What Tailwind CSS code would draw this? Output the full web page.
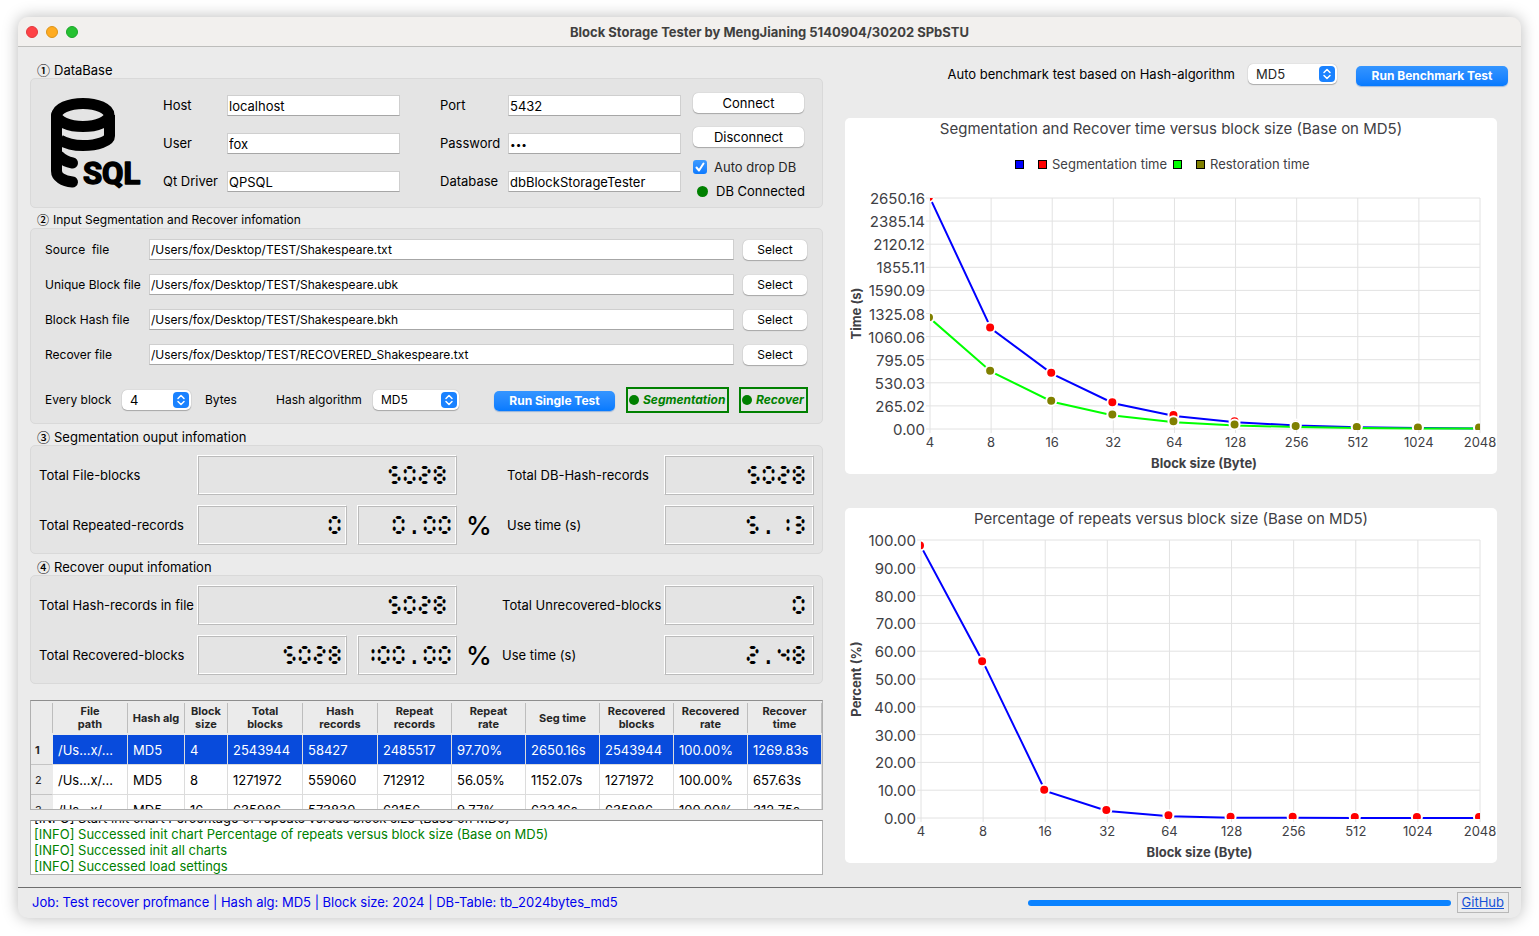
<!DOCTYPE html>
<html lang="en">
<head>
<meta charset="utf-8">
<title>Block Storage Tester</title>
<script src="https://cdn.jsdelivr.net/npm/@tailwindcss/browser@4"></script>
</head>
<body class="flex min-h-screen bg-white p-[18px] pt-[17px] font-['Inter','Noto_Sans_CJK_SC',sans-serif] text-[13px] leading-4 text-black">
<div class="flex min-w-0 flex-1 flex-col rounded-[10px] bg-[#ebebeb] shadow-[0_0_16px_rgba(0,0,0,0.28)]">

  <header class="flex h-[30px] items-center rounded-t-[10px] border-b border-[#bdbdbb] bg-[#f2f0ee] px-2">
    <div class="flex w-24 gap-2">
      <button type="button" aria-label="Close" class="size-3 rounded-full border border-[#e2383c] bg-[#fe4246]"></button>
      <button type="button" aria-label="Minimize" class="size-3 rounded-full border border-[#dc9418] bg-[#ffab20]"></button>
      <button type="button" aria-label="Zoom" class="size-3 rounded-full border border-[#1ba52a] bg-[#25c131]"></button>
    </div>
    <h1 class="flex-1 text-center font-bold text-[#403f3e]">Block Storage Tester by MengJianing 5140904/30202 SPbSTU</h1>
    <div class="w-24"></div>
  </header>

  <main class="grid flex-1 grid-cols-[793fr_664fr] gap-[22px] px-3 pt-[15px] pb-3">

    <div class="flex min-w-0 flex-col">
      <section>
        <h2 class="flex h-4 items-center gap-1 pl-[7px]"><span class="font-['Noto_Sans_CJK_SC'] font-medium">①</span>DataBase</h2>
        <div class="flex h-[130px] items-center rounded-[5px] border border-[#d9d9d9] bg-[#e4e4e4] pr-[18px] pl-5">
          <svg class="mr-[22px] h-[90px] w-[90px] shrink-0 overflow-visible" viewBox="0 0 90 90" role="img" aria-label="SQL database">
            <ellipse cx="32" cy="17" rx="26" ry="11.500" fill="none" stroke="#000" stroke-width="11"/>
            <path d="M5.500 17V73C5.500 79 12 83 21.500 84" fill="none" stroke="#000" stroke-width="11" stroke-linecap="round"/>
            <path d="M58.500 17V38C58.500 43 47 47.500 32 47.500C22 47.500 14 45 9 42" fill="none" stroke="#000" stroke-width="11"/>
            <path d="M8 58C12 62 16 64 21.500 65" fill="none" stroke="#000" stroke-width="11" stroke-linecap="round"/>
            <text x="32" y="86" font-family="Roboto, sans-serif" font-weight="700" font-size="31" fill="#000" stroke="#000" stroke-width="1.500" stroke-linejoin="round">SQL</text>
          </svg>
          <div class="grid flex-[237] grid-cols-[64px_1fr] items-center gap-y-[17px]">
            <label for="host">Host</label>
            <input id="host" value="localhost" class="h-[21px] w-full min-w-0 border border-[#cfcfcf] border-b-[#a6a6a6] bg-white px-px pt-px">
            <label for="user">User</label>
            <input id="user" value="fox" class="h-[21px] w-full min-w-0 border border-[#cfcfcf] border-b-[#a6a6a6] bg-white px-px pt-px">
            <label for="driver">Qt Driver</label>
            <input id="driver" value="QPSQL" class="h-[21px] w-full min-w-0 border border-[#cfcfcf] border-b-[#a6a6a6] bg-white px-px pt-px">
          </div>
          <div class="ml-10 grid flex-[241] grid-cols-[68px_1fr] items-center gap-y-[17px]">
            <label for="port">Port</label>
            <input id="port" value="5432" class="h-[21px] w-full min-w-0 border border-[#cfcfcf] border-b-[#a6a6a6] bg-white px-px pt-px">
            <label for="password">Password</label>
            <input id="password" type="password" value="fox" class="h-[21px] w-full min-w-0 border border-[#cfcfcf] border-b-[#a6a6a6] bg-white px-px pt-px text-[10px]">
            <label for="database">Database</label>
            <input id="database" value="dbBlockStorageTester" class="h-[21px] w-full min-w-0 border border-[#cfcfcf] border-b-[#a6a6a6] bg-white px-px pt-px">
          </div>
          <div class="ml-3 flex w-[111px] flex-col pt-[6px]">
            <button type="button" class="h-5 rounded-[5px] bg-white shadow-[0_0_1px_rgba(0,0,0,0.3),0_1px_1px_rgba(0,0,0,0.25)]">Connect</button>
            <button type="button" class="mt-[14px] h-5 rounded-[5px] bg-white shadow-[0_0_1px_rgba(0,0,0,0.3),0_1px_1px_rgba(0,0,0,0.25)]">Disconnect</button>
            <div class="relative mt-3 flex items-center gap-[7px]">
              <input id="autodrop" type="checkbox" checked class="size-[14px] appearance-none rounded-[3px] bg-linear-to-b from-[#3d9bff] to-[#0a7aff]">
              <svg class="pointer-events-none absolute left-0 size-[14px]" viewBox="0 0 14 14" fill="none" stroke="#fff" stroke-width="2" stroke-linecap="round" stroke-linejoin="round"><path d="M3.500 7.500L6 10.500L10.500 3.500"/></svg>
              <label for="autodrop" class="text-[#262626]">Auto drop DB</label>
            </div>
            <p class="mt-2 flex items-center gap-2 pl-1 whitespace-nowrap"><span class="size-[11px] shrink-0 rounded-full bg-[#008000]"></span>DB Connected</p>
          </div>
        </div>
      </section>

      <section class="mt-1">
        <h2 class="flex h-4 items-center gap-1 pl-[7px] text-[12px]"><span class="font-['Noto_Sans_CJK_SC'] font-medium">②</span>Input Segmentation and Recover infomation</h2>
        <div class="flex flex-col rounded-[5px] border border-[#d9d9d9] bg-[#e4e4e4] pt-[10px] pr-[14px] pb-[10px] pl-[14px] text-[12px]">
          <div class="grid grid-cols-[104px_1fr_64px] items-center gap-y-[14px] pr-px">
            <label for="src" class="whitespace-pre">Source  file</label>
            <input id="src" value="/Users/fox/Desktop/TEST/Shakespeare.txt" class="mr-[9px] h-[21px] min-w-0 border border-[#cfcfcf] border-b-[#a6a6a6] bg-white px-px">
            <button type="button" class="h-5 rounded-[5px] bg-white shadow-[0_0_1px_rgba(0,0,0,0.3),0_1px_1px_rgba(0,0,0,0.25)]">Select</button>
            <label for="ubk">Unique Block file</label>
            <input id="ubk" value="/Users/fox/Desktop/TEST/Shakespeare.ubk" class="mr-[9px] h-[21px] min-w-0 border border-[#cfcfcf] border-b-[#a6a6a6] bg-white px-px">
            <button type="button" class="h-5 rounded-[5px] bg-white shadow-[0_0_1px_rgba(0,0,0,0.3),0_1px_1px_rgba(0,0,0,0.25)]">Select</button>
            <label for="bkh">Block Hash file</label>
            <input id="bkh" value="/Users/fox/Desktop/TEST/Shakespeare.bkh" class="mr-[9px] h-[21px] min-w-0 border border-[#cfcfcf] border-b-[#a6a6a6] bg-white px-px">
            <button type="button" class="h-5 rounded-[5px] bg-white shadow-[0_0_1px_rgba(0,0,0,0.3),0_1px_1px_rgba(0,0,0,0.25)]">Select</button>
            <label for="rec">Recover file</label>
            <input id="rec" value="/Users/fox/Desktop/TEST/RECOVERED_Shakespeare.txt" class="mr-[9px] h-[21px] min-w-0 border border-[#cfcfcf] border-b-[#a6a6a6] bg-white px-px">
            <button type="button" class="h-5 rounded-[5px] bg-white shadow-[0_0_1px_rgba(0,0,0,0.3),0_1px_1px_rgba(0,0,0,0.25)]">Select</button>
          </div>
          <div class="mt-[22px] flex items-center">
            <label for="block" class="w-[77px]">Every block</label>
            <div class="relative w-[69px]">
              <select id="block" class="block h-5 w-full appearance-none rounded-[5px] bg-white pl-2 text-[13px] shadow-[0_0_1px_rgba(0,0,0,0.3),0_1px_1px_rgba(0,0,0,0.25)]"><option>4</option><option>8</option><option>16</option></select>
              <svg class="pointer-events-none absolute top-[2px] right-[2px] size-4" viewBox="0 0 16 16"><rect width="16" height="16" rx="4" fill="#1a82ff"/><path d="M5 6.500L8 3.500L11 6.500M5 9.500L8 12.500L11 9.500" fill="none" stroke="#fff" stroke-width="1.500" stroke-linecap="round" stroke-linejoin="round"/></svg>
            </div>
            <span class="ml-[14px] w-[71px]">Bytes</span>
            <label for="alg" class="w-[97px]">Hash algorithm</label>
            <div class="relative w-[86px]">
              <select id="alg" class="block h-5 w-full appearance-none rounded-[5px] bg-white pl-2 shadow-[0_0_1px_rgba(0,0,0,0.3),0_1px_1px_rgba(0,0,0,0.25)]"><option>MD5</option><option>SHA1</option><option>SHA256</option></select>
              <svg class="pointer-events-none absolute top-[2px] right-[2px] size-4" viewBox="0 0 16 16"><rect width="16" height="16" rx="4" fill="#1a82ff"/><path d="M5 6.500L8 3.500L11 6.500M5 9.500L8 12.500L11 9.500" fill="none" stroke="#fff" stroke-width="1.500" stroke-linecap="round" stroke-linejoin="round"/></svg>
            </div>
            <button type="button" class="mt-[2px] ml-auto h-5 w-[121px] rounded-[5px] bg-linear-to-b from-[#3495ff] to-[#057aff] font-bold text-white shadow-[0_1px_1px_rgba(0,90,200,0.35)]">Run Single Test</button>
            <p class="ml-[11px] flex h-[26px] w-[103px] items-center gap-1 border-2 border-[#008000] pl-px font-bold text-[#008000] italic"><span class="size-[10px] shrink-0 rounded-full bg-[#008000]"></span>Segmentation</p>
            <p class="ml-[10px] flex h-[26px] w-[69px] items-center gap-1 border-2 border-[#008000] pl-px font-bold text-[#008000] italic"><span class="size-[10px] shrink-0 rounded-full bg-[#008000]"></span>Recover</p>
          </div>
        </div>
      </section>

      <section class="mt-[5px]">
        <h2 class="flex h-4 items-center gap-1 pl-[7px]"><span class="font-['Noto_Sans_CJK_SC'] font-medium">③</span>Segmentation ouput infomation</h2>
        <div class="grid grid-cols-[158px_150fr_10px_100fr_50px_157px_150fr] items-center gap-y-[10px] rounded-[5px] border border-[#d9d9d9] bg-[#e4e4e4] pt-[9px] pr-2 pb-2 pl-2">
          <span>Total File-blocks</span>
          <output aria-label="5028" class="col-span-3 flex h-10 items-center justify-end border border-white border-r-[#bbb] border-b-[#bbb] pt-1 pr-[9px] font-['Liberation_Mono',monospace] text-[26px] shadow-[inset_1px_1px_0_#bbb,inset_-1px_-1px_0_#fff]">&#x1FBF5;&#x1FBF0;&#x1FBF2;&#x1FBF8;</output>
          <span></span>
          <span>Total DB-Hash-records</span>
          <output aria-label="5028" class="flex h-10 items-center justify-end border border-white border-r-[#bbb] border-b-[#bbb] pt-1 pr-[7px] font-['Liberation_Mono',monospace] text-[26px] shadow-[inset_1px_1px_0_#bbb,inset_-1px_-1px_0_#fff]">&#x1FBF5;&#x1FBF0;&#x1FBF2;&#x1FBF8;</output>
          <span>Total Repeated-records</span>
          <output aria-label="0" class="flex h-10 items-center justify-end border border-white border-r-[#bbb] border-b-[#bbb] pt-1 pr-[4px] font-['Liberation_Mono',monospace] text-[26px] shadow-[inset_1px_1px_0_#bbb,inset_-1px_-1px_0_#fff]">&#x1FBF0;</output>
          <span></span>
          <output aria-label="0.00" class="flex h-10 items-center justify-end border border-white border-r-[#bbb] border-b-[#bbb] pt-1 pr-[4px] font-['Liberation_Mono',monospace] text-[26px] shadow-[inset_1px_1px_0_#bbb,inset_-1px_-1px_0_#fff]">&#x1FBF0;.&#x1FBF0;&#x1FBF0;</output>
          <span class="pt-[2px] pl-[9px] text-[26px] font-medium">%</span>
          <span>Use time (s)</span>
          <output aria-label="5.13" class="flex h-10 items-center justify-end border border-white border-r-[#bbb] border-b-[#bbb] pt-1 pr-[7px] font-['Liberation_Mono',monospace] text-[26px] shadow-[inset_1px_1px_0_#bbb,inset_-1px_-1px_0_#fff]">&#x1FBF5;.&#x1FBF1;&#x1FBF3;</output>
        </div>
      </section>

      <section class="mt-[5px]">
        <h2 class="flex h-4 items-center gap-1 pl-[7px]"><span class="font-['Noto_Sans_CJK_SC'] font-medium">④</span>Recover ouput infomation</h2>
        <div class="grid grid-cols-[158px_150fr_10px_100fr_45px_162px_150fr] items-center gap-y-[10px] rounded-[5px] border border-[#d9d9d9] bg-[#e4e4e4] pt-[9px] pr-2 pb-2 pl-2">
          <span>Total Hash-records in file</span>
          <output aria-label="5028" class="col-span-3 flex h-10 items-center justify-end border border-white border-r-[#bbb] border-b-[#bbb] pt-1 pr-[9px] font-['Liberation_Mono',monospace] text-[26px] shadow-[inset_1px_1px_0_#bbb,inset_-1px_-1px_0_#fff]">&#x1FBF5;&#x1FBF0;&#x1FBF2;&#x1FBF8;</output>
          <span></span>
          <span>Total Unrecovered-blocks</span>
          <output aria-label="0" class="flex h-10 items-center justify-end border border-white border-r-[#bbb] border-b-[#bbb] pt-1 pr-[7px] font-['Liberation_Mono',monospace] text-[26px] shadow-[inset_1px_1px_0_#bbb,inset_-1px_-1px_0_#fff]">&#x1FBF0;</output>
          <span>Total Recovered-blocks</span>
          <output aria-label="5028" class="flex h-10 items-center justify-end border border-white border-r-[#bbb] border-b-[#bbb] pt-1 pr-[4px] font-['Liberation_Mono',monospace] text-[26px] shadow-[inset_1px_1px_0_#bbb,inset_-1px_-1px_0_#fff]">&#x1FBF5;&#x1FBF0;&#x1FBF2;&#x1FBF8;</output>
          <span></span>
          <output aria-label="100.00" class="flex h-10 min-w-0 items-center justify-end border border-white border-r-[#bbb] border-b-[#bbb] pt-1 pr-[4px] font-['Liberation_Mono',monospace] text-[26px] shadow-[inset_1px_1px_0_#bbb,inset_-1px_-1px_0_#fff]">&#x1FBF1;&#x1FBF0;&#x1FBF0;.&#x1FBF0;&#x1FBF0;</output>
          <span class="pt-[2px] pl-[9px] text-[26px] font-medium">%</span>
          <span>Use time (s)</span>
          <output aria-label="2.48" class="flex h-10 items-center justify-end border border-white border-r-[#bbb] border-b-[#bbb] pt-1 pr-[7px] font-['Liberation_Mono',monospace] text-[26px] shadow-[inset_1px_1px_0_#bbb,inset_-1px_-1px_0_#fff]">&#x1FBF2;.&#x1FBF4;&#x1FBF8;</output>
        </div>
      </section>

      <div class="mt-4 h-[110px] overflow-hidden border border-[#b0b0b0] border-t-[#8e8e8e] bg-white">
        <table class="w-full table-fixed border-separate border-spacing-0">
          <colgroup><col class="w-[22px]"><col class="w-[75px]"><col class="w-[57px]"><col class="w-[43px]"><col class="w-[75px]"><col class="w-[75px]"><col class="w-[74px]"><col class="w-[74px]"><col class="w-[74px]"><col class="w-[74px]"><col class="w-[74px]"><col class="w-[74px]"></colgroup>
          <thead class="bg-[#ebebeb] text-[11px] leading-[13px] text-[#262626]"><tr id="head" class="h-[34px]"></tr></thead>
          <tbody id="rows"></tbody>
        </table>
      </div>

      <div class="mt-[10px] flex h-[55px] flex-col justify-end overflow-hidden border border-[#b0b0b0] border-t-[#8e8e8e] bg-white px-[3px] text-[#008000]">
        <p class="text-black">[INFO] Start init chart Percentage of repeats versus block size (Base on MD5)</p>
        <p>[INFO] Successed init chart Percentage of repeats versus block size (Base on MD5)</p>
        <p>[INFO] Successed init all charts</p>
        <p>[INFO] Successed load settings</p>
      </div>
    </div>

    <div class="flex min-w-0 flex-col">
      <div class="flex h-6 items-center justify-end pr-px">
        <label for="bench" class="text-[13px]">Auto benchmark test based on Hash-algorithm</label>
        <div class="relative ml-[13px] w-[89px]">
          <select id="bench" class="block h-5 w-full appearance-none rounded-[5px] bg-white pl-2 text-[#262626] shadow-[0_0_1px_rgba(0,0,0,0.3),0_1px_1px_rgba(0,0,0,0.25)]"><option>MD5</option><option>SHA1</option><option>SHA256</option></select>
          <svg class="pointer-events-none absolute top-[2px] right-[2px] size-4" viewBox="0 0 16 16"><rect width="16" height="16" rx="4" fill="#1a82ff"/><path d="M5 6.500L8 3.500L11 6.500M5 9.500L8 12.500L11 9.500" fill="none" stroke="#fff" stroke-width="1.500" stroke-linecap="round" stroke-linejoin="round"/></svg>
        </div>
        <button type="button" class="mt-1 ml-[19px] h-5 w-[152px] rounded-[5px] bg-linear-to-b from-[#3495ff] to-[#057aff] text-[12px] font-bold text-white shadow-[0_1px_1px_rgba(0,90,200,0.35)]">Run Benchmark Test</button>
      </div>
      <figure class="mt-8 mr-3 rounded-[5px] bg-white"><svg id="chart-time" viewBox="0 0 652 356" class="block h-auto w-full" role="img" aria-label="Time versus block size"></svg></figure>
      <figure class="mt-[34px] mr-3 rounded-[5px] bg-white"><svg id="chart-repeat" viewBox="0 0 652 355" class="block h-auto w-full" role="img" aria-label="Repeats versus block size"></svg></figure>
    </div>
  </main>

  <footer class="flex h-[31px] items-center border-t border-[#6e6e6e] pr-3 pl-[14px]">
    <p class="flex-1 pb-[2px] text-[#0000ee]">Job: Test recover profmance | Hash alg: MD5 | Block size: 2024 | DB-Table: tb_2024bytes_md5</p>
    <progress value="100" max="100" aria-label="Job progress" class="h-[6px] w-[423px] appearance-none overflow-hidden rounded-full [&::-webkit-progress-bar]:bg-[#d5d5d5] [&::-webkit-progress-value]:bg-[#0a82ff]"></progress>
    <a href="#" class="mb-[2px] ml-[6px] flex h-[21px] items-center border border-[#b8b8b8] px-1 text-[#1552d8] underline">GitHub</a>
  </footer>
</div>

<script>
const heads = ['', 'File\npath', 'Hash alg', 'Block\nsize', 'Total\nblocks', 'Hash\nrecords', 'Repeat\nrecords', 'Repeat\nrate', 'Seg time', 'Recovered\nblocks', 'Recovered\nrate', 'Recover\ntime'];
document.getElementById('head').innerHTML = heads.map(h =>
  `<th class="p-0 font-bold"><div class="flex h-[30px] items-center justify-center border-r border-[#bdbdbd] text-center whitespace-pre">${h}</div></th>`).join('');

const rows = [
  ['/Us...x/...', 'MD5', '4', '2543944', '58427', '2485517', '97.70%', '2650.16s', '2543944', '100.00%', '1269.83s'],
  ['/Us...x/...', 'MD5', '8', '1271972', '559060', '712912', '56.05%', '1152.07s', '1271972', '100.00%', '657.63s'],
  ['/Us...x/...', 'MD5', '16', '635986', '573830', '62156', '9.77%', '633.16s', '635986', '100.00%', '312.75s']];
document.getElementById('rows').innerHTML = rows.map((r, i) =>
  `<tr class="h-[30px] ${i === 0 ? 'bg-[#084bdc] text-white' : ''}"><th class="border-r border-b border-r-[#ebebeb] border-b-[#c4c4c4] bg-[#ebebeb] p-0 pl-1 text-left text-[11px] text-[#262626] ${i === 0 ? 'font-bold' : 'font-normal'}">${i + 1}</th>` +
  r.map(c => `<td class="border-r border-b border-[#dcdcdc] p-0 pl-[5px] whitespace-nowrap">${c}</td>`).join('') + '</tr>').join('');

const sizes = ['4', '8', '16', '32', '64', '128', '256', '512', '1024', '2048'];

// Draws one line chart: grid, tick labels, series with ringed markers, axis titles.
function chart(id, c) {
  const w = c.right - c.left, h = c.bottom - c.top, dx = w / 9, dy = h / 10;
  let s = `<defs><clipPath id="${id}-clip"><rect x="${c.left}" y="${c.top}" width="${w}" height="${h + 1}"/></clipPath></defs>`;
  s += `<g stroke="#e2e2e2" fill="none">`;
  for (let i = 0; i <= 10; i++) s += `<path d="M${c.left - 4} ${c.top + i * dy}H${c.right}"/>`;
  for (let i = 0; i <= 9; i++) s += `<path d="M${c.left + i * dx} ${c.top}V${c.bottom + 4}"/>`;
  s += `</g><g font-size="15" fill="#404044" text-anchor="end">`;
  for (let i = 0; i <= 10; i++) s += `<text x="${c.left - 5}" y="${c.top + i * dy + 6}">${(c.max * (10 - i) / 10).toFixed(2)}</text>`;
  s += `</g><g font-size="13" fill="#404044" text-anchor="middle">`;
  sizes.forEach((t, i) => s += `<text x="${c.left + i * dx}" y="${c.bottom + 18}">${t}</text>`);
  s += `</g><g clip-path="url(#${id}-clip)">`;
  for (const line of c.series) {
    const pts = line.data.map((v, i) => [c.left + i * dx, c.bottom - v / c.max * h]);
    s += `<polyline points="${pts.map(p => p.join()).join(' ')}" fill="none" stroke="${line.color}" stroke-width="2"/>`;
    for (const [x, y] of pts) s += `<circle cx="${x - 1}" cy="${y - 1}" r="5" fill="${line.dot}" stroke="#fff" stroke-width="2"/>`;
  }
  s += `</g><g font-size="13" fill="#404044" font-weight="700" text-anchor="middle">`;
  s += `<text x="${(c.left + c.right) / 2 - 1}" y="${c.bottom + 39}">Block size (Byte)</text>`;
  s += `<text transform="translate(16 ${(c.top + c.bottom) / 2}) rotate(-90)">${c.yTitle}</text></g>`;
  s += `<text x="326" y="16" font-size="15" fill="#404044" text-anchor="middle">${c.title}</text>`;
  for (const k of c.legend || []) {
    s += k.text ? `<text x="${k.x}" y="51" font-size="13" fill="#404044">${k.text}</text>`
      : `<rect x="${k.x}.5" y="42.5" width="8" height="8" fill="${k.fill}" stroke="#000"/>`;
  }
  document.getElementById(id).innerHTML = s;
}
chart('chart-time', {
  left: 85, right: 635, top: 80, bottom: 311, max: 2650.156, yTitle: 'Time (s)',
  title: 'Segmentation and Recover time versus block size (Base on MD5)',
  series: [
    { color: '#0000ff', dot: '#ff0000', data: [2650.16, 1152.07, 633.16, 296, 149, 77, 40, 20, 11, 6] },
    { color: '#00ff00', dot: '#808000', data: [1269.83, 657.63, 312.75, 156, 78, 41, 22, 12, 7, 5] }],
  legend: [{ x: 170, fill: '#0000ff' }, { x: 193, fill: '#ff0000' }, { x: 207, text: 'Segmentation time' },
    { x: 328, fill: '#00ff00' }, { x: 351, fill: '#808000' }, { x: 365, text: 'Restoration time' }]
});
chart('chart-repeat', {
  left: 76, right: 635, top: 32, bottom: 310, max: 100, yTitle: 'Percent (%)',
  title: 'Percentage of repeats versus block size (Base on MD5)',
  series: [{ color: '#0000ff', dot: '#ff0000', data: [97.7, 56.05, 9.77, 2.5, 0.6, 0.1, 0.05, 0.03, 0.02, 0.01] }]
});
</script>
</body>
</html>
